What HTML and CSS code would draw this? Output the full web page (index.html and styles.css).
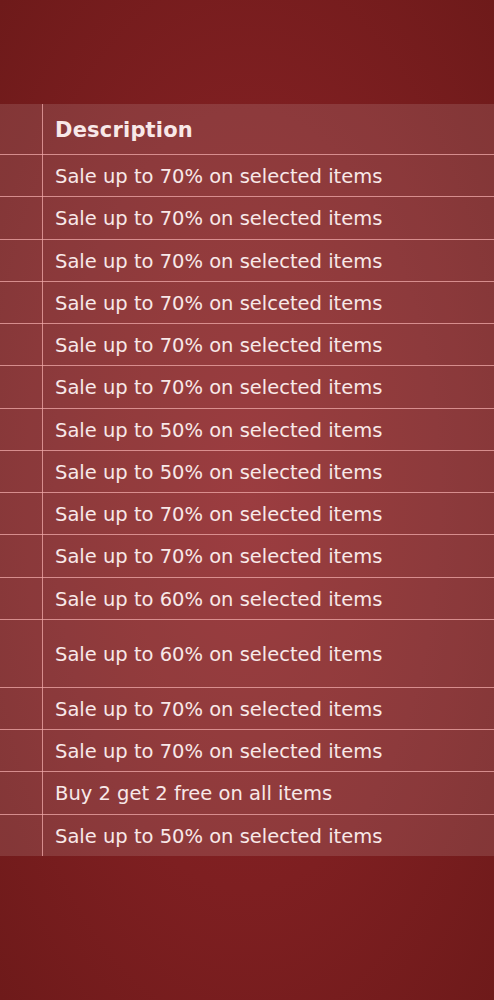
FILE: index.html
```html
<!DOCTYPE html>
<html lang="en">
<head>
  <meta charset="UTF-8">
  <title>Offers</title>
  <link rel="stylesheet" href="styles.css">
</head>
<body>

<div class="table-wrap">
  <table class="offers">
    <thead>
      <tr>
        <th class="store"></th>
        <th>Description</th>
      </tr>
    </thead>
    <tbody>
      <tr><td class="store"></td><td>Sale up to 70% on selected items</td></tr>
      <tr><td class="store"></td><td>Sale up to 70% on selected items</td></tr>
      <tr><td class="store"></td><td>Sale up to 70% on selected items</td></tr>
      <tr><td class="store"></td><td>Sale up to 70% on selceted items</td></tr>
      <tr><td class="store"></td><td>Sale up to 70% on selected items</td></tr>
      <tr><td class="store"></td><td>Sale up to 70% on selected items</td></tr>
      <tr><td class="store"></td><td>Sale up to 50% on selected items</td></tr>
      <tr><td class="store"></td><td>Sale up to 50% on selected items</td></tr>
      <tr><td class="store"></td><td>Sale up to 70% on selected items</td></tr>
      <tr><td class="store"></td><td>Sale up to 70% on selected items</td></tr>
      <tr><td class="store"></td><td>Sale up to 60% on selected items</td></tr>
      <tr class="tall"><td class="store"></td><td>Sale up to 60% on selected items</td></tr>
      <tr><td class="store"></td><td>Sale up to 70% on selected items</td></tr>
      <tr><td class="store"></td><td>Sale up to 70% on selected items</td></tr>
      <tr><td class="store"></td><td>Buy 2 get 2 free on all items</td></tr>
      <tr><td class="store"></td><td>Sale up to 50% on selected items</td></tr>
    </tbody>
  </table>
</div>

</body>
</html>
```

FILE: styles.css
```css
html, body {
  height: 100%;
}

body {
  margin: 0;
  font-family: "DejaVu Sans", sans-serif;
  color: #f8e8e8;
  background: radial-gradient(ellipse at 50% 50%, #8e2326 0%, #7e1f21 55%, #6e1a1a 100%);
  overflow: hidden;
}

.table-wrap {
  padding-top: 104px;
  overflow: hidden;
}

.offers {
  border-collapse: collapse;
  margin-left: -78px;
  width: 640px;
  background: rgba(255, 255, 255, 0.12);
}

.offers th,
.offers td {
  text-align: left;
  padding: 2px 12px 0;
  border-bottom: 1px solid rgba(240, 170, 170, 0.75);
}

.offers th {
  height: 48px;
  font-size: 21px;
  font-weight: 600;
  letter-spacing: 0.2px;
}

.offers td {
  height: 39.25px;
  font-size: 19.5px;
  font-weight: 400;
}

.offers tbody tr:last-child td {
  border-bottom: none;
}

.offers .tall td {
  height: 65px;
}

.offers .store {
  width: 96px;
  border-right: 1px solid rgba(240, 170, 170, 0.75);
}
```
